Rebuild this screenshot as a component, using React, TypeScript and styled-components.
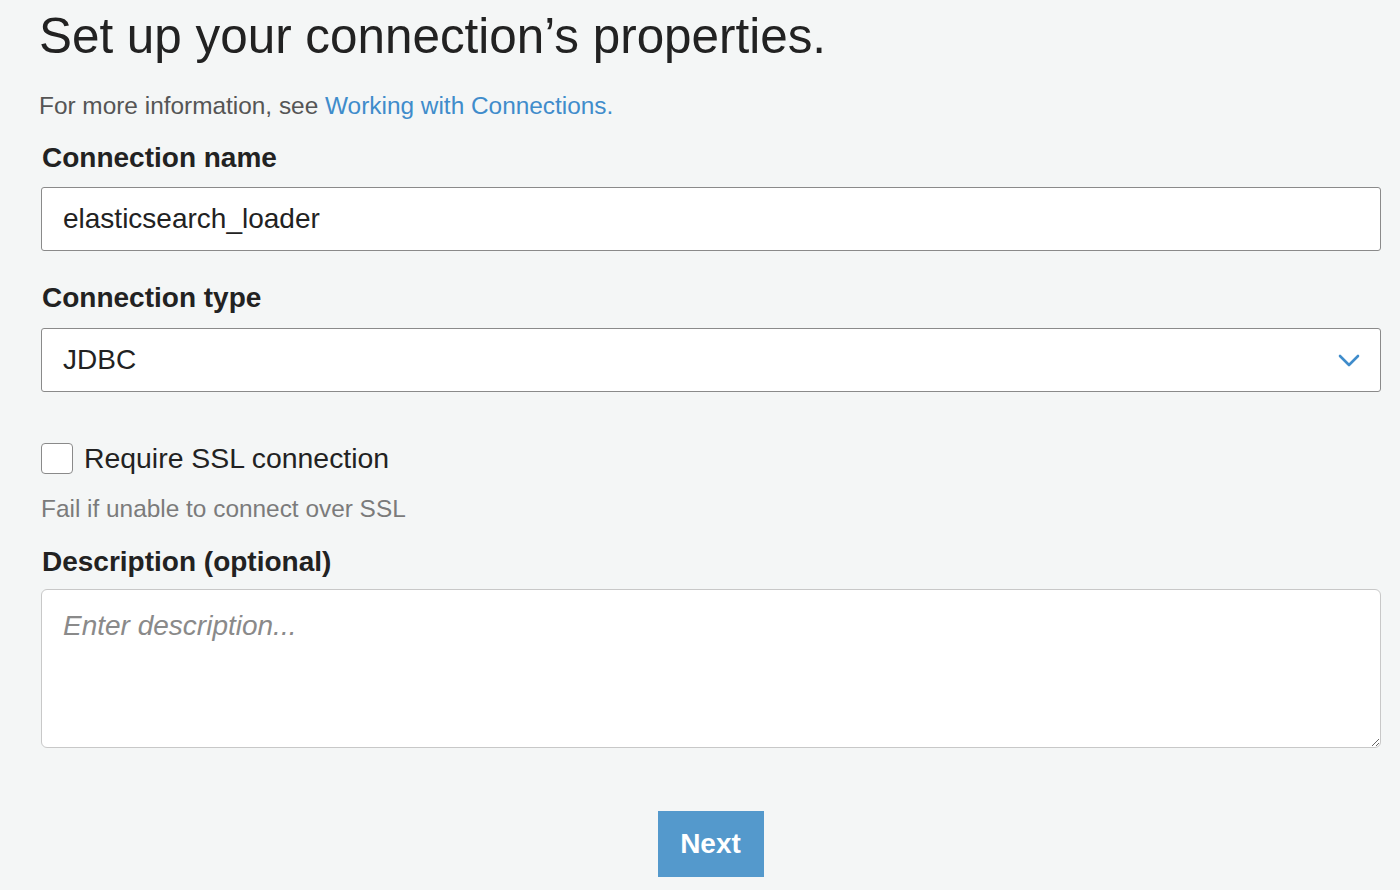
import React, {useState} from 'react';
import styled, {createGlobalStyle} from 'styled-components';

const GlobalStyle = createGlobalStyle`
  html, body {
    margin: 0;
    padding: 0;
    background: #f4f6f6;
  }
  body {
    font-family: "Liberation Sans", Arial, Helvetica, sans-serif;
    color: #222;
  }
`;

const Page = styled.div`
  width: 1400px;
  height: 890px;
  box-sizing: border-box;
  padding: 8px 19px 0 41px;
  overflow: hidden;
`;

const Title = styled.h1`
  margin: 0 0 0 -2px;
  font-size: 49.4px;
  font-weight: 400;
  line-height: 56px;
  color: #222;
`;

const Intro = styled.p`
  margin: 28px 0 0 -2px;
  font-size: 24.4px;
  line-height: 28px;
  color: #555;
`;

const Link = styled.a`
  color: #3f8ccb;
  text-decoration: none;
`;

const Label = styled.label<{ $top: number }>`
  display: block;
  font-size: 28px;
  font-weight: 700;
  line-height: 32px;
  color: #222;
  margin: ${p => p.$top}px 0 0 1px;
`;

const TextInput = styled.input`
  display: block;
  box-sizing: border-box;
  width: 1340px;
  height: 64px;
  margin-top: 13px;
  padding: 0 21px;
  border: 1px solid #8a8a8a;
  border-radius: 3px;
  background: #fff;
  font-family: inherit;
  font-size: 28px;
  color: #222;
  outline: none;
`;

const SelectBox = styled.div`
  box-sizing: border-box;
  width: 1340px;
  height: 64px;
  margin-top: 14px;
  padding: 0 21px;
  border: 1px solid #8a8a8a;
  border-radius: 3px;
  background: #fff;
  display: flex;
  align-items: center;
  justify-content: space-between;
  font-size: 28px;
  color: #222;
`;

const Chevron = styled.svg`
  width: 22px;
  height: 14px;
  margin-right: -1px;
  margin-top: 2px;
`;

const CheckRow = styled.label`
  display: flex;
  align-items: center;
  gap: 11px;
  margin-top: 50px;
  font-size: 28.4px;
  color: #222;
  cursor: pointer;
`;

const CheckBox = styled.span`
  display: inline-block;
  box-sizing: border-box;
  width: 32px;
  height: 31px;
  border: 1px solid #8a8a8a;
  border-radius: 4px;
  background: #fff;
`;

const Help = styled.div`
  margin-top: 20px;
  font-size: 24.4px;
  line-height: 28px;
  color: #7b7b7b;
`;

const TextArea = styled.textarea`
  display: block;
  box-sizing: border-box;
  width: 1340px;
  height: 159px;
  margin-top: 11px;
  padding: 20px 21px;
  border: 1px solid #c8c8c8;
  border-radius: 6px;
  background: #fff;
  font-family: inherit;
  font-size: 28px;
  color: #222;
  outline: none;
  resize: vertical;

  &::placeholder {
    color: #8a8a8a;
    font-style: italic;
  }
`;

const ButtonRow = styled.div`
  display: flex;
  justify-content: center;
  width: 1340px;
  margin-top: 63px;
`;

const NextButton = styled.button`
  width: 106px;
  height: 66px;
  margin-left: -1px;
  border: none;
  border-radius: 0;
  background: #5499cc;
  color: #fff;
  font-family: inherit;
  font-size: 28px;
  font-weight: 700;
  cursor: pointer;
`;

export default function App() {
    const [name, setName] = useState('elasticsearch_loader');
    const [ssl, setSsl] = useState(false);

    return (
        <>
            <GlobalStyle/>
            <Page>
                <Title>Set up your connection’s properties.</Title>
                <Intro>
                    For more information, see <Link href="#">Working with Connections.</Link>
                </Intro>

                <Label $top={22}>Connection name</Label>
                <TextInput value={name} onChange={e => setName(e.target.value)}/>

                <Label $top={31}>Connection type</Label>
                <SelectBox>
                    <span>JDBC</span>
                    <Chevron viewBox="0 0 22 14">
                        <path d="M2 2 L11 11 L20 2" fill="none" stroke="#3f8ccb" strokeWidth="2.6"
                              strokeLinecap="round" strokeLinejoin="round"/>
                    </Chevron>
                </SelectBox>

                <CheckRow onClick={() => setSsl(!ssl)}>
                    <CheckBox/>
                    Require SSL connection
                </CheckRow>
                <Help>Fail if unable to connect over SSL</Help>

                <Label $top={23}>Description (optional)</Label>
                <TextArea placeholder="Enter description..."/>

                <ButtonRow>
                    <NextButton>Next</NextButton>
                </ButtonRow>
            </Page>
        </>
    );
}
